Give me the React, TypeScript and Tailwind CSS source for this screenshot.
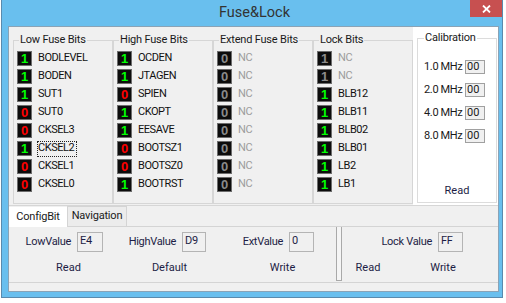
import React from "react";

type Bit = { name: string; v: number; off?: boolean; focus?: boolean };

const lowBits: Bit[] = [
  { name: "BODLEVEL", v: 1 },
  { name: "BODEN", v: 1 },
  { name: "SUT1", v: 1 },
  { name: "SUT0", v: 0 },
  { name: "CKSEL3", v: 0 },
  { name: "CKSEL2", v: 1, focus: true },
  { name: "CKSEL1", v: 0 },
  { name: "CKSEL0", v: 0 },
];

const highBits: Bit[] = [
  { name: "OCDEN", v: 1 },
  { name: "JTAGEN", v: 1 },
  { name: "SPIEN", v: 0 },
  { name: "CKOPT", v: 1 },
  { name: "EESAVE", v: 1 },
  { name: "BOOTSZ1", v: 0 },
  { name: "BOOTSZ0", v: 0 },
  { name: "BOOTRST", v: 1 },
];

const extBits: Bit[] = Array.from({ length: 8 }, () => ({ name: "NC", v: 0, off: true }));

const lockBits: Bit[] = [
  { name: "NC", v: 1, off: true },
  { name: "NC", v: 1, off: true },
  { name: "BLB12", v: 1 },
  { name: "BLB11", v: 1 },
  { name: "BLB02", v: 1 },
  { name: "BLB01", v: 1 },
  { name: "LB2", v: 1 },
  { name: "LB1", v: 1 },
];

function Led({ v, off }: { v: number; off?: boolean }) {
  const color = off ? "text-[#8a8a8a]" : v ? "text-[#00ff00]" : "text-[#ff0000]";
  return (
    <div
      className={`w-[15px] h-[15px] shrink-0 bg-[#0c0c0c] border border-[#6c6c6c] flex items-center justify-center font-['Liberation_Sans',sans-serif] font-bold text-[13px] leading-none ${color}`}
    >
      {v}
    </div>
  );
}

function FuseGroup({ title, bits }: { title: string; bits: Bit[] }) {
  return (
    <fieldset className="w-[100px] h-[171px] shrink-0 border border-[#d6d6d6] pl-[3px] pt-[4px]">
      <legend className="ml-[2px] px-[1px] text-[11px] tracking-[-0.2px] leading-[14px] text-[#1a1a1a]">{title}</legend>
      <div className="flex flex-col gap-[3px]">
        {bits.map((b, i) => (
          <div key={i} className="h-[15px] flex items-center">
            <Led v={b.v} off={b.off} />
            {b.focus ? (
              <span className="ml-[5px] h-[16px] pr-[2px] flex items-center border border-dotted border-[#222] text-[11px] tracking-[-0.45px] text-[#111]">
                {b.name}
              </span>
            ) : (
              <span
                className={`ml-[6px] text-[11px] tracking-[-0.45px] ${b.off ? "text-[#9c9c9c]" : "text-[#111]"}`}
              >
                {b.name}
              </span>
            )}
          </div>
        ))}
      </div>
    </fieldset>
  );
}

function ValueBox({ value, w }: { value: string; w: string }) {
  return (
    <div className={`${w} h-[20px] bg-[#f0f0f0] border border-[#b4b4b4] pl-[2px] pt-[1px] text-[11px] leading-[14px] text-[#1d1d45]`}>
      {value}
    </div>
  );
}

export default function App() {
  const freqs = ["1.0 MHz", "2.0 MHz", "4.0 MHz", "8.0 MHz"];

  return (
    <div className="w-[506px] h-[303px] bg-white overflow-hidden font-[Roboto] text-[#111]">
      <div className="ml-[1px] w-[502px] h-[298px] border-x border-b border-[#5a8aad] bg-[#69bfee] relative flex flex-col">
        {/* title bar */}
        <div className="h-[26px] flex items-center justify-center pl-[5px] text-[14.5px] text-[#333]">
          Fuse&amp;Lock
        </div>
        <div className="absolute right-0 top-0 w-[32px] h-[17px] bg-[#c75050] flex items-center justify-center">
          <svg width="9" height="8" viewBox="0 0 9 8">
            <path d="M1 0.5 L8 7.5 M8 0.5 L1 7.5" stroke="white" strokeWidth="1.8" />
          </svg>
        </div>

        {/* client area */}
        <div className="ml-[6px] w-[491px] h-[266px] border border-[#8aa3b6] bg-[#f0f0f0] flex flex-col">
          <div className="flex h-[179px] border-b border-[#d6d6d6]">
            <div className="w-[404px] pl-[4px] pt-[6px] flex">
              <FuseGroup title="Low Fuse Bits" bits={lowBits} />
              <FuseGroup title="High Fuse Bits" bits={highBits} />
              <FuseGroup title="Extend Fuse Bits" bits={extBits} />
              <FuseGroup title="Lock Bits" bits={lockBits} />
            </div>
            <div className="w-[85px] bg-white pl-[4px] pt-[4px]">
              <fieldset className="w-[80px] h-[172px] border border-[#dcdcdc]">
                <legend className="ml-[6px] px-[1px] text-[11px] tracking-[-0.2px] leading-[14px] text-[#1a1a1a]">Calibration</legend>
                <div className="h-[156px] flex flex-col pt-[15px]">
                  <div className="flex flex-col gap-[9px] ml-[6px]">
                    {freqs.map((f) => (
                      <div key={f} className="h-[14px] flex items-center">
                        <span className="w-[41px] text-[11px] tracking-[-0.35px] text-[#1a1a1a]">{f}</span>
                        <div className="w-[20px] h-[14px] bg-[#f0f0f0] border border-[#a0a0a0] pl-[1px] text-[11px] leading-[12px] text-[#1a1a1a]">
                          00
                        </div>
                      </div>
                    ))}
                  </div>
                  <div className="mt-auto mb-[3px] text-center text-[11px] leading-[14px] text-[#1d1d45]">Read</div>
                </div>
              </fieldset>
            </div>
          </div>

          {/* tabs */}
          <div className="h-[20px] flex items-end">
            <div className="relative -mb-px w-[58px] h-[20px] bg-white flex items-center justify-center text-[11px] tracking-[-0.2px] text-[#1a1a1a]">
              ConfigBit
            </div>
            <div className="w-[60px] h-[20px] bg-[#ececec] border-x border-t border-[#d4d4d4] flex items-center justify-center text-[11px] tracking-[-0.2px] text-[#1a1a1a]">
              Navigation
            </div>
          </div>

          <div className="h-[57px] border-y border-[#d4d4d4] flex">
            <div className="w-[327px] pt-[5px] flex flex-col">
              <div className="h-[20px] flex items-center text-[11px] tracking-[-0.3px] text-[#1d1d45]">
                <div className="w-[94px] flex items-center justify-end gap-[6px]">
                  <span>LowValue</span>
                  <ValueBox value="E4" w="w-[26px]" />
                </div>
                <div className="w-[103px] flex items-center justify-end gap-[6px]">
                  <span>HighValue</span>
                  <ValueBox value="D9" w="w-[24px]" />
                </div>
                <div className="w-[108px] flex items-center justify-end gap-[6px]">
                  <span>ExtValue</span>
                  <ValueBox value="0" w="w-[25px]" />
                </div>
              </div>
              <div className="mt-[5px] h-[23px] flex text-[11px] text-[#1d1d45]">
                <div className="ml-[22px] w-[75px] flex items-center justify-center">Read</div>
                <div className="ml-[26px] w-[75px] flex items-center justify-center">Default</div>
                <div className="ml-[38px] w-[75px] flex items-center justify-center">Write</div>
              </div>
            </div>

            <div className="w-[6px] h-[54px] bg-[#f5f5f5] border-x border-b border-[#a9a9a9]" />

            <div className="w-[156px] pt-[5px] flex flex-col">
              <div className="h-[20px] w-[121px] flex items-center justify-end gap-[6px] text-[11px] tracking-[-0.3px] text-[#1d1d45]">
                <span>Lock Value</span>
                <ValueBox value="FF" w="w-[25px]" />
              </div>
              <div className="mt-[5px] h-[23px] flex text-[11px] text-[#1d1d45]">
                <div className="ml-[1px] w-[50px] flex items-center justify-center">Read</div>
                <div className="ml-[25px] w-[50px] flex items-center justify-center">Write</div>
              </div>
            </div>
          </div>

          <div className="h-[8px]" />
        </div>
      </div>
    </div>
  );
}
